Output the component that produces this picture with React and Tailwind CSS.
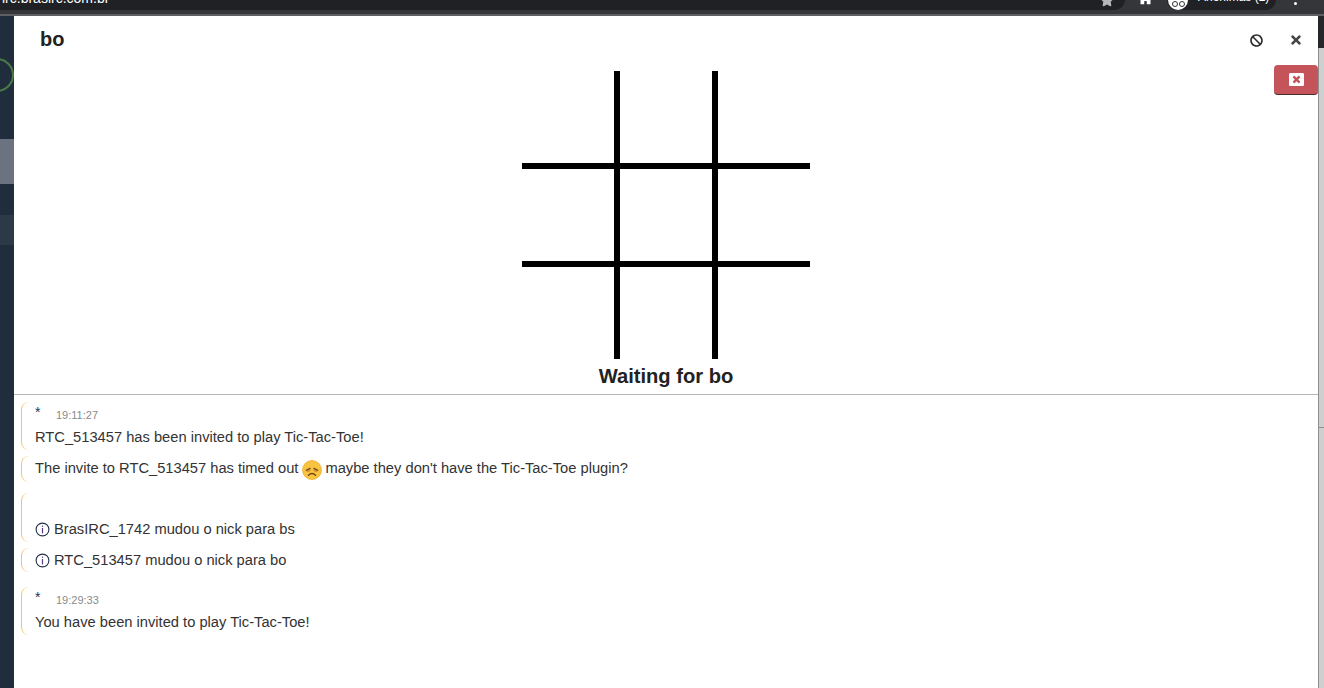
import React from 'react';
import { FaBan, FaTimes, FaWindowClose, FaStar, FaHome } from 'react-icons/fa';

function SadFace() {
  return (
    <svg width="20" height="20" viewBox="0 0 20 20" className="inline-block align-middle ml-[4px] mr-[3px] mt-[2px]">
      <circle cx="10" cy="10" r="9.5" fill="#f8c440" stroke="#eeb030" strokeWidth="0.8" />
      <path d="M4.5 10.2 L8 8.6 M15.5 10.2 L12 8.6" stroke="#7a5320" strokeWidth="1.6" fill="none" strokeLinecap="round" />
      <path d="M5.5 11.6 L8 10.6 M14.5 11.6 L12 10.6" stroke="#d9822b" strokeWidth="1.1" fill="none" strokeLinecap="round" />
      <path d="M6.5 15.2 Q10 11.8 13.5 15.2" stroke="#6e4216" strokeWidth="1.4" fill="none" strokeLinecap="round" />
    </svg>
  );
}

function InfoIcon() {
  return (
    <svg width="15" height="15" viewBox="0 0 15 15" className="inline-block align-middle mr-[4px] mt-[-1px]">
      <circle cx="7.5" cy="7.5" r="6.4" fill="none" stroke="#23304a" strokeWidth="1.1" />
      <path d="M7.5 3.6 V4.9" stroke="#5a3a80" strokeWidth="1.2" />
      <path d="M7.5 6 V11.4" stroke="#5a3a80" strokeWidth="1.2" />
    </svg>
  );
}

function Meta({ time }) {
  return (
    <div className="flex items-start h-[25px] pt-[2px]">
      <span className="text-[14px] leading-[16px] text-[#1d3557] w-[21px]">*</span>
      <span className="text-[11px] leading-[14px] text-[#8a8a8a] mt-[4px]">{time}</span>
    </div>
  );
}

function Message({ className, children }) {
  return (
    <div className={`ml-[7px] pl-[13px] border-l border-[#f5c265] rounded-l-[8px] text-[14.7px] leading-[20px] text-[#333] ${className}`}>
      {children}
    </div>
  );
}

export default function App() {
  return (
    <div className="h-[688px] w-[1324px] flex flex-col overflow-hidden bg-white font-['Liberation_Sans',Arial,sans-serif]">
      {/* browser chrome, mostly cut off */}
      <div className="h-[14px] bg-[#35363a] flex overflow-hidden shrink-0">
        <div className="w-[1125px] h-[10px] shrink-0 bg-[#202124] rounded-br-[10px] flex justify-between overflow-hidden pl-[2px] pr-[11px]">
          <div className="text-white text-[14px] leading-[14px] mt-[-9px]">irc.brasirc.com.br</div>
          <FaStar size={14} className="text-[#b5b6b8] mt-[-7px]" />
        </div>
        <FaHome size={15} className="text-white ml-[13px] mt-[-9px] shrink-0" />
        <div className="ml-[14px] w-[109px] h-[10px] shrink-0 bg-[#202124] rounded-b-[10px] flex pl-[1px] gap-[10px]">
          <div className="w-[20px] h-[20px] rounded-full bg-white mt-[-10px] shrink-0 flex items-end justify-center pb-[3px] gap-px">
            <span className="w-[6px] h-[6px] rounded-full border border-[#333]" />
            <span className="w-[6px] h-[6px] rounded-full border border-[#333]" />
          </div>
          <span className="text-white text-[12px] leading-[14px] mt-[-10px] whitespace-nowrap">Anônimas (2)</span>
        </div>
        <span className="w-[3px] h-[3px] bg-white rounded-full ml-[18px] mt-[2px] shrink-0" />
      </div>
      <div className="h-[2px] bg-[#5f6063] shrink-0" />

      <div className="flex flex-1 min-h-0">
        {/* sidebar sliver */}
        <div className="w-[14px] shrink-0 bg-[#1f2d3d] flex flex-col overflow-hidden">
          <div className="h-[42px] shrink-0" />
          <div className="w-[34px] h-[34px] ml-[-20px] rounded-full border-2 border-[#4a7a45] shrink-0" />
          <div className="h-[47px] shrink-0" />
          <div className="h-[45px] bg-[#6b7280] shrink-0" />
          <div className="h-[31px] shrink-0" />
          <div className="h-[30px] bg-[#2c3a47] shrink-0" />
        </div>

        <div className="flex-1 min-w-0 flex flex-col relative">
          {/* header */}
          <div className="h-[55px] shrink-0 flex items-start justify-between pl-[26px] pr-[15px] pt-[9px]">
            <span className="text-[20px] leading-[28px] font-bold text-[#222]">bo</span>
            <div className="flex items-center h-[28px] mt-px gap-[26px]">
              <FaBan size={13} className="text-[#2b2b2b]" />
              <FaTimes size={14} className="text-[#444]" />
            </div>
          </div>
          <button className="absolute right-0 top-[49px] w-[44px] h-[30px] bg-[#c4545a] border-b border-[#4a2a2a] rounded-[4px] flex items-center justify-center">
            <FaWindowClose size={15} className="text-white" />
          </button>

          {/* board */}
          <div className="flex justify-center shrink-0">
            <svg width="288" height="288" viewBox="0 0 288 288" className="block">
              <rect x="92" y="0" width="6" height="288" fill="#000" />
              <rect x="190" y="0" width="6" height="288" fill="#000" />
              <rect x="0" y="92" width="288" height="6" fill="#000" />
              <rect x="0" y="190" width="288" height="6" fill="#000" />
            </svg>
          </div>
          <div className="h-[36px] shrink-0 text-center text-[20.15px] leading-[34px] font-bold text-[#222] border-b border-[#b5b5b5]">
            Waiting for bo
          </div>

          {/* messages */}
          <div className="flex-1 min-h-0 pt-[7px]">
            <Message className="h-[48px]">
              <Meta time="19:11:27" />
              <div>RTC_513457 has been invited to play Tic-Tac-Toe!</div>
            </Message>
            <Message className="h-[26px] mt-[6px] leading-[24px]">
              The invite to RTC_513457 has timed out<SadFace />maybe they don't have the Tic-Tac-Toe plugin?
            </Message>
            <Message className="h-[49px] mt-[11px] pt-[26px] border-[#a8adb3]">
              <InfoIcon />BrasIRC_1742 mudou o nick para bs
            </Message>
            <Message className="h-[24px] mt-[6px] pt-[2px]">
              <InfoIcon />RTC_513457 mudou o nick para bo
            </Message>
            <Message className="h-[48px] mt-[15px]">
              <Meta time="19:29:33" />
              <div>You have been invited to play Tic-Tac-Toe!</div>
            </Message>
          </div>
        </div>

        {/* page scrollbar behind the window */}
        <div className="w-[6px] shrink-0 flex flex-col bg-[#cfcfcf] border-l border-[#8f8f8f]">
          <div className="h-[32px] bg-[#26272a] ml-[-1px]" />
          <div className="h-[379px]" />
          <div className="h-px bg-[#8f8f8f]" />
        </div>
      </div>
    </div>
  );
}
